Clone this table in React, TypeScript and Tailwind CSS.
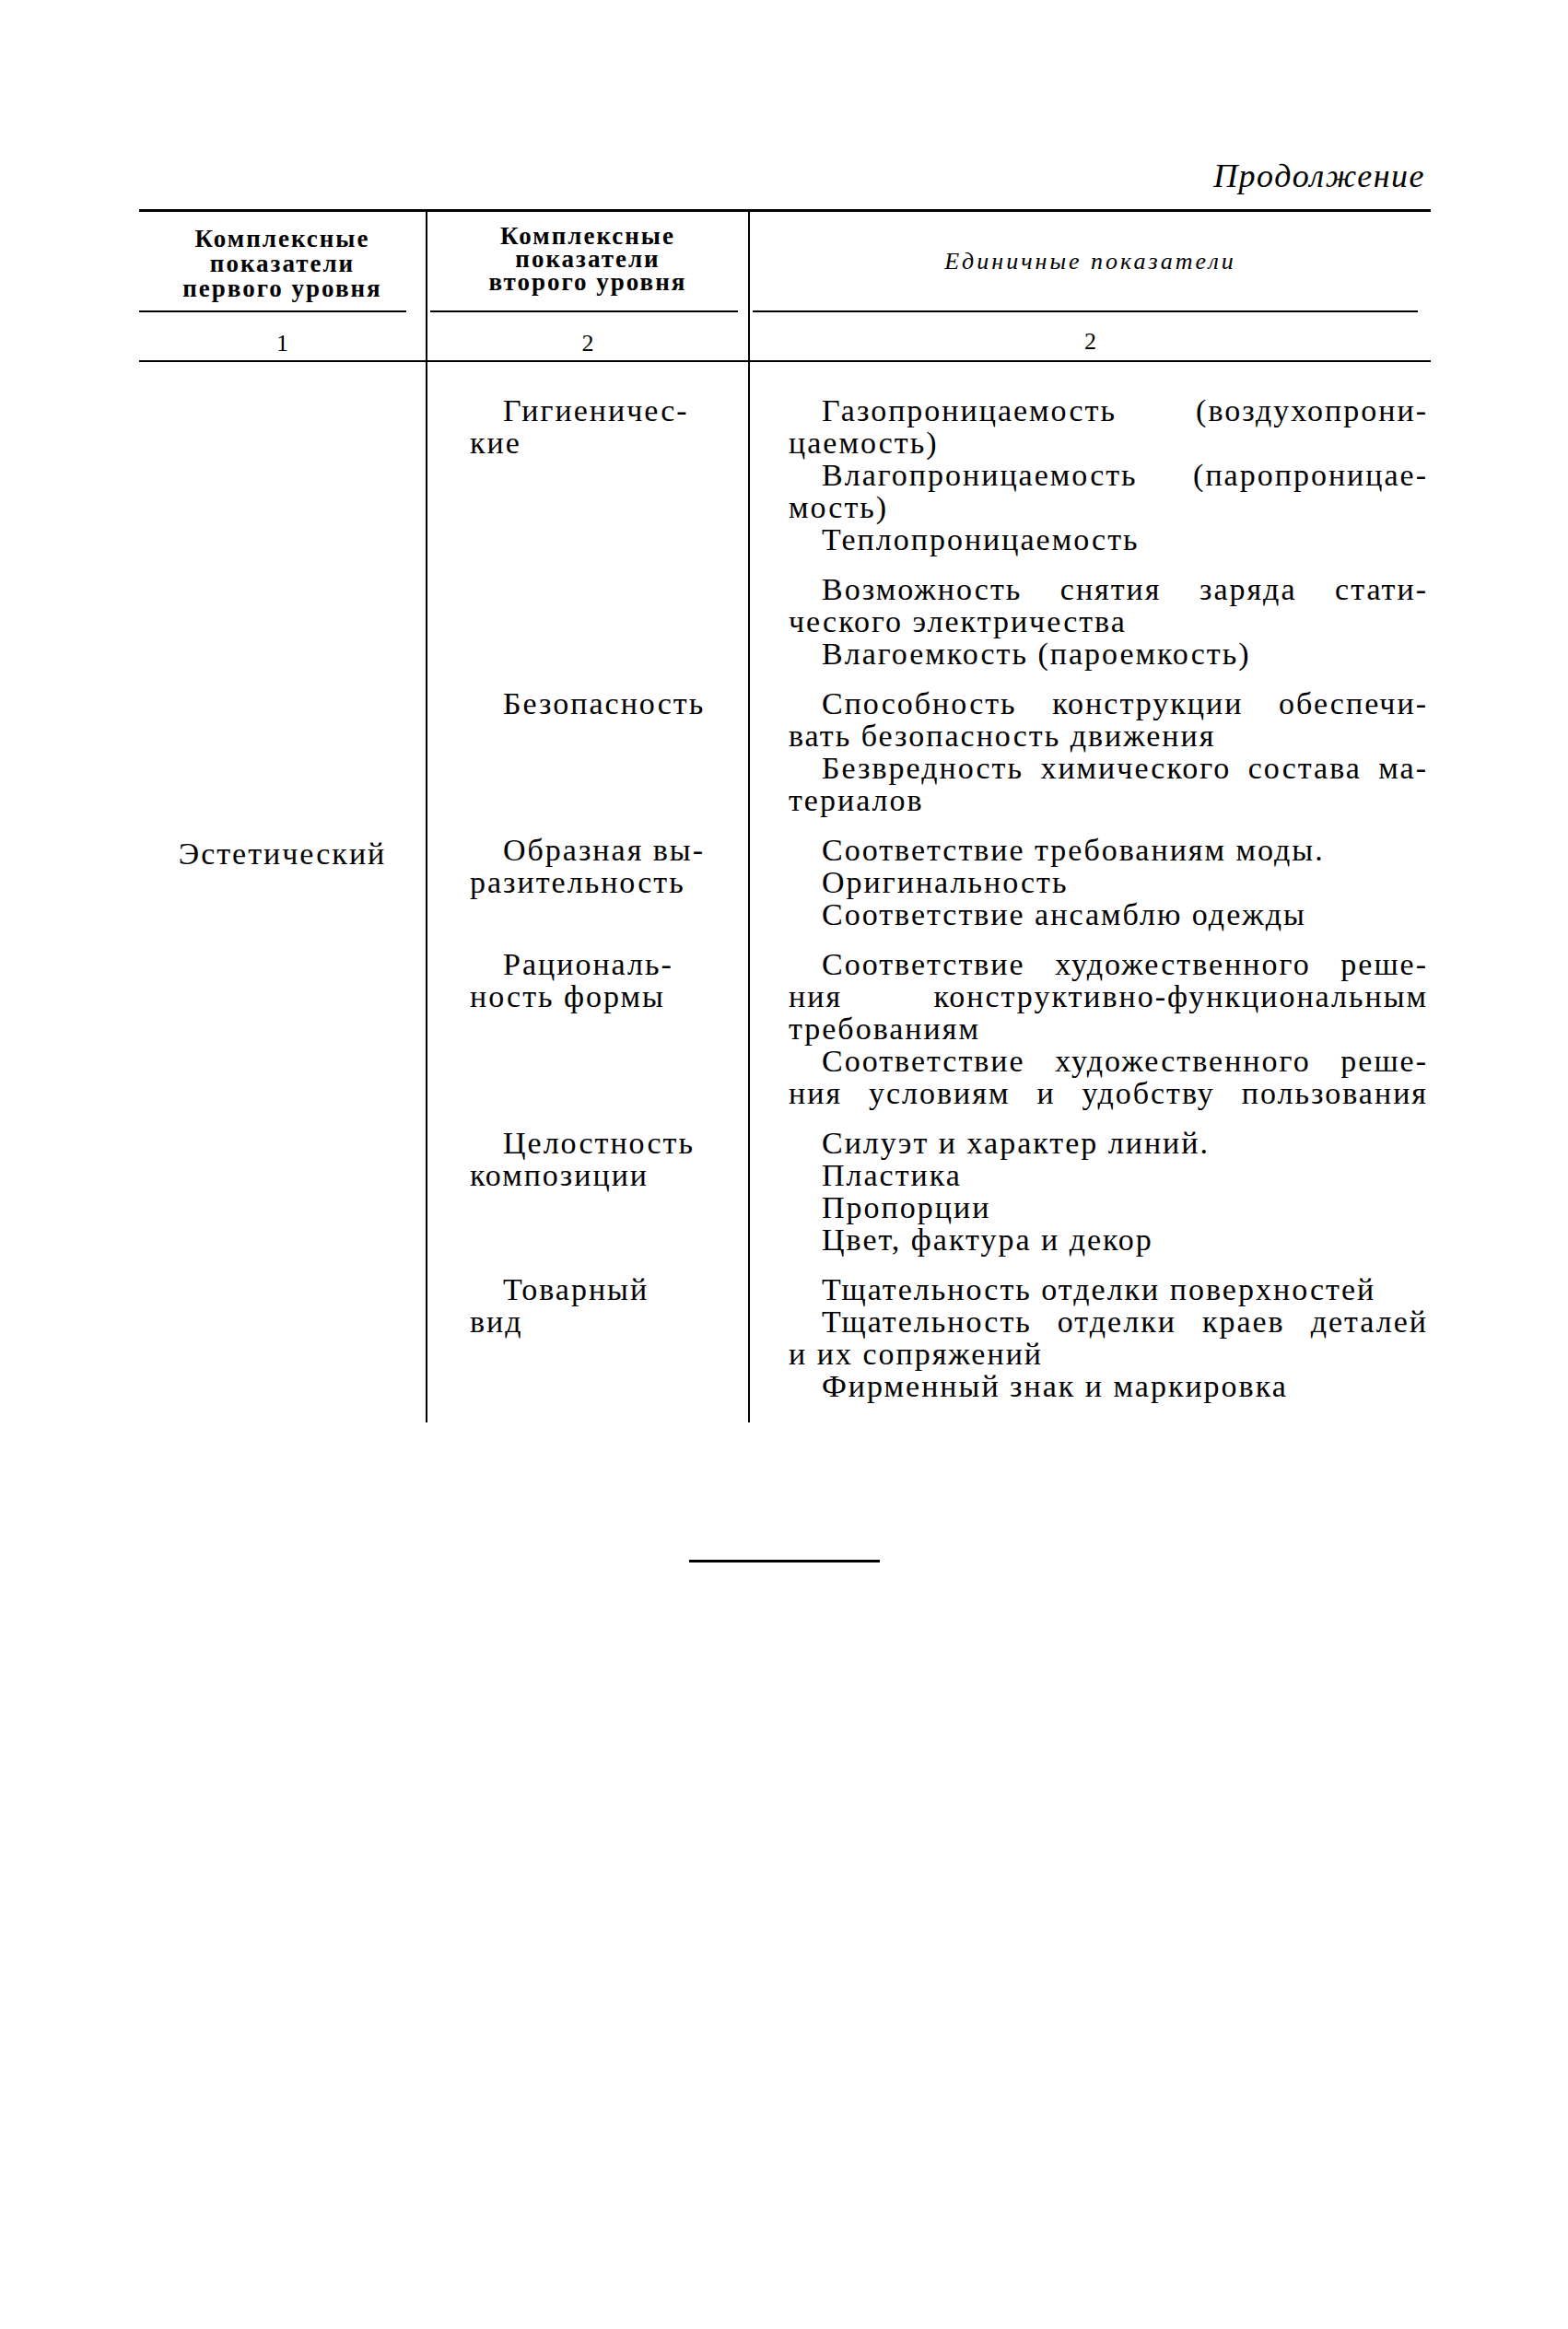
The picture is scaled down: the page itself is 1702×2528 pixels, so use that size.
import React from 'react'

type Line = { t: string; i?: boolean; j?: boolean }

interface Row {
  first?: string
  second: string[]
  groups: Line[][]
}

const rows: Row[] = [
  {
    second: ['Гигиеничес-', 'кие'],
    groups: [
      [
        { t: 'Газопроницаемость (воздухопрони-', i: true, j: true },
        { t: 'цаемость)' },
        { t: 'Влагопроницаемость (паропроницае-', i: true, j: true },
        { t: 'мость)' },
        { t: 'Теплопроницаемость', i: true },
      ],
      [
        { t: 'Возможность снятия заряда стати-', i: true, j: true },
        { t: 'ческого электричества' },
        { t: 'Влагоемкость (пароемкость)', i: true },
      ],
    ],
  },
  {
    second: ['Безопасность'],
    groups: [
      [
        { t: 'Способность конструкции обеспечи-', i: true, j: true },
        { t: 'вать безопасность движения' },
        { t: 'Безвредность химического состава ма-', i: true, j: true },
        { t: 'териалов' },
      ],
    ],
  },
  {
    first: 'Эстетический',
    second: ['Образная вы-', 'разительность'],
    groups: [
      [
        { t: 'Соответствие требованиям моды.', i: true },
        { t: 'Оригинальность', i: true },
        { t: 'Соответствие ансамблю одежды', i: true },
      ],
    ],
  },
  {
    second: ['Рациональ-', 'ность формы'],
    groups: [
      [
        { t: 'Соответствие художественного реше-', i: true, j: true },
        { t: 'ния конструктивно-функциональным', j: true },
        { t: 'требованиям' },
        { t: 'Соответствие художественного реше-', i: true, j: true },
        { t: 'ния условиям и удобству пользования', j: true },
      ],
    ],
  },
  {
    second: ['Целостность', 'композиции'],
    groups: [
      [
        { t: 'Силуэт и характер линий.', i: true },
        { t: 'Пластика', i: true },
        { t: 'Пропорции', i: true },
        { t: 'Цвет, фактура и декор', i: true },
      ],
    ],
  },
  {
    second: ['Товарный', 'вид'],
    groups: [
      [
        { t: 'Тщательность отделки поверхностей', i: true },
        { t: 'Тщательность отделки краев деталей', i: true, j: true },
        { t: 'и их сопряжений' },
        { t: 'Фирменный знак и маркировка', i: true },
      ],
    ],
  },
]

function TextLine({ line }: { line: Line }) {
  return (
    <div
      className={
        (line.i ? 'pl-[36px] ' : '') +
        (line.j ? 'text-justify [text-align-last:justify] ' : '') +
        'whitespace-nowrap'
      }
    >
      {line.t}
    </div>
  )
}

export default function App() {
  return (
    <div className="min-h-[2528px] w-full bg-white text-black font-['Liberation_Serif',serif]">
      <div className="w-[1553px] pl-[151px] pt-[171px]">
        <div className="text-right pr-[6px] text-[36px] leading-[40px] italic tracking-[1.5px]">Продолжение</div>

        {/* head */}
        <div className="mt-[16px] border-t-[3px] border-black grid grid-cols-[311px_350px_741px]">
          <div className="flex flex-col">
            <div className="h-[107px] flex flex-col items-center justify-center pt-[6px] text-[27px] leading-[27px] font-bold tracking-[2px] text-center">
              <div>Комплексные</div>
              <div>показатели</div>
              <div>первого уровня</div>
            </div>
            <div className="h-[2px] bg-black mr-[21px]" />
            <div className="h-[52px] flex items-center justify-center pt-[14px] text-[26px]">1</div>
          </div>
          <div className="flex flex-col border-l-2 border-black">
            <div className="h-[107px] flex flex-col items-center justify-center pb-[4px] text-[27px] leading-[25px] font-bold tracking-[2px] text-center">
              <div>Комплексные</div>
              <div>показатели</div>
              <div>второго уровня</div>
            </div>
            <div className="h-[2px] bg-black ml-[3px] mr-[11px]" />
            <div className="h-[52px] flex items-center justify-center pt-[14px] text-[26px]">2</div>
          </div>
          <div className="flex flex-col border-l-2 border-black">
            <div className="h-[107px] flex items-center justify-center text-[26px] italic tracking-[3px]">
              Единичные показатели
            </div>
            <div className="h-[2px] bg-black ml-[3px] mr-[14px]" />
            <div className="h-[52px] flex items-center justify-center pt-[10px] text-[26px]">2</div>
          </div>
        </div>

        {/* body */}
        <div className="border-t-2 border-black grid grid-cols-[311px_350px_741px] text-[34px] leading-[35px] tracking-[2px]">
          {rows.map((row, ri) => {
            const pad = (ri === 0 ? 'pt-[35px] ' : 'pt-[19px] ') + (ri === rows.length - 1 ? 'pb-[22px] ' : '')
            return (
              <React.Fragment key={ri}>
                <div className={pad + 'text-center'}>
                  {row.first && <div className="pt-[4px]">{row.first}</div>}
                </div>
                <div className={pad + 'border-l-2 border-black pl-[46px]'}>
                  {row.second.map((s, si) => (
                    <div key={si} className={si === 0 ? 'pl-[36px]' : ''}>
                      {s}
                    </div>
                  ))}
                </div>
                <div className={pad + 'border-l-2 border-black pl-[42px] pr-[3px] flex flex-col gap-[19px]'}>
                  {row.groups.map((g, gi) => (
                    <div key={gi}>
                      {g.map((line, li) => (
                        <TextLine key={li} line={line} />
                      ))}
                    </div>
                  ))}
                </div>
              </React.Fragment>
            )
          })}
        </div>
      </div>

      <div className="mx-auto mt-[149px] h-[3px] w-[207px] bg-black" />
    </div>
  )
}
